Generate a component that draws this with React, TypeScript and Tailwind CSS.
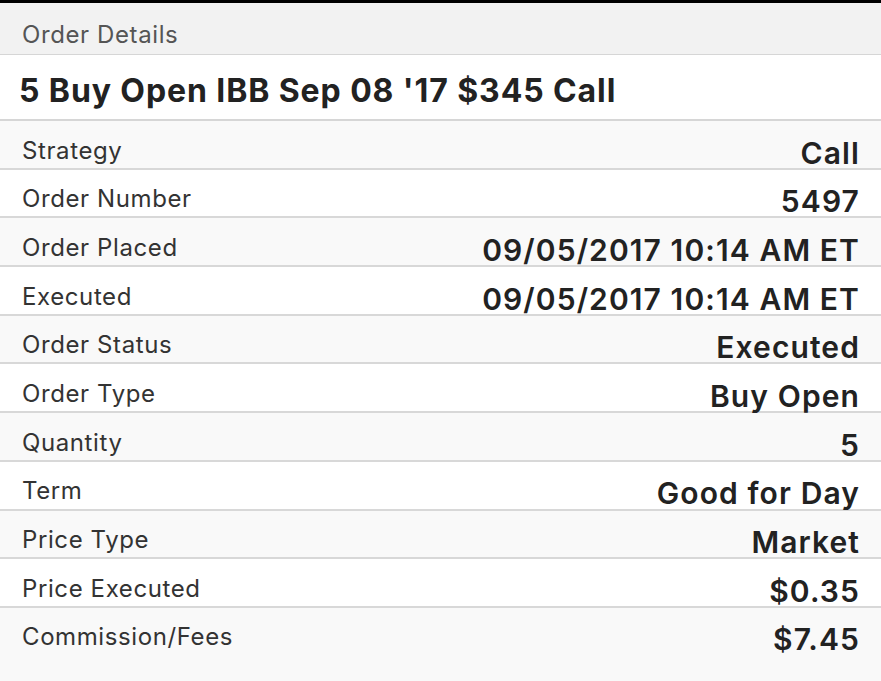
const rows: [string, string][] = [
  ["Strategy", "Call"],
  ["Order Number", "5497"],
  ["Order Placed", "09/05/2017 10:14 AM ET"],
  ["Executed", "09/05/2017 10:14 AM ET"],
  ["Order Status", "Executed"],
  ["Order Type", "Buy Open"],
  ["Quantity", "5"],
  ["Term", "Good for Day"],
  ["Price Type", "Market"],
  ["Price Executed", "$0.35"],
  ["Commission/Fees", "$7.45"],
];

export default function App() {
  return (
    <div className="min-h-[681px] w-[881px] bg-[#f9f9f9] font-['Inter',sans-serif]">
      <div className="h-[3px] bg-black" />
      <div className="h-[52px] border-b border-[#d6d6d6] bg-[#f2f2f2] px-[22px] pt-[20px] text-[24px] leading-none tracking-[0.6px] text-[#555]">
        Order Details
      </div>
      <div className="h-[66px] border-b-2 border-[#d6d6d6] bg-white px-[19px] pt-[20px] text-[32px] font-bold leading-none tracking-[0.9px] text-[#222]">
        5 Buy Open IBB Sep 08 '17 $345 Call
      </div>
      {rows.map(([label, value], i) => (
        <div
          key={label}
          className={`flex h-[48.7px] items-start justify-between border-b-2 border-[#d8d8d8] pl-[22px] pr-[21px] pt-[17px] leading-none last:border-b-0 ${
            i % 2 === 0 ? "bg-[#f9f9f9]" : "bg-white"
          }`}
        >
          <span className="mt-[0.5px] text-[24px] tracking-[0.6px] text-[#333]">{label}</span>
          <span className="-mt-[0.5px] text-[30px] font-semibold tracking-[1.1px] text-[#222]">{value}</span>
        </div>
      ))}
    </div>
  );
}
